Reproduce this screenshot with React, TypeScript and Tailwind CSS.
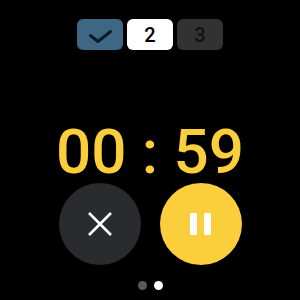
export default function App() {
  return (
    <div
      className="w-[300px] h-[300px] bg-black flex flex-col items-center overflow-hidden"
      style={{ fontFamily: 'Roboto, "Noto Sans", sans-serif' }}
    >
      <div className="mt-[19px] flex gap-1">
        <div className="w-[46px] h-[31px] rounded-[6px] bg-[#3e6783] flex items-center justify-center">
          <svg width="24" height="16" viewBox="0 0 24 16" fill="none">
            <path d="M2.5 8.5 L10 14.5 L22.5 4.5" stroke="#0c1a26" strokeWidth="3" strokeLinecap="round" strokeLinejoin="round" />
          </svg>
        </div>
        <div className="w-[46px] h-[31px] rounded-[6px] bg-white flex items-center justify-center text-[20px] leading-none font-medium text-black">
          2
        </div>
        <div className="w-[46px] h-[31px] rounded-[6px] bg-[#323232] flex items-center justify-center text-[20px] leading-none font-medium text-[#111]">
          3
        </div>
      </div>

      <div className="mt-[71px] text-[62px] leading-none font-medium text-[#fbcf3c] whitespace-pre">
        00 : 59
      </div>

      <div className="flex gap-[19px]">
        <button className="w-[82px] h-[82px] rounded-full bg-[#2a2b2d] flex items-center justify-center">
          <svg width="26" height="26" viewBox="0 0 26 26" fill="none">
            <path d="M2 2 L24 24 M24 2 L2 24" stroke="white" strokeWidth="2.6" />
          </svg>
        </button>
        <button className="w-[82px] h-[82px] rounded-full bg-[#fbcf3c] flex items-center justify-center gap-[7px]">
          <span className="w-[7px] h-[22px] rounded-[1px] bg-white" />
          <span className="w-[7px] h-[22px] rounded-[1px] bg-white" />
        </button>
      </div>

      <div className="mt-4 flex gap-[7px]">
        <span className="w-[9px] h-[9px] rounded-full bg-[#5a5a5a]" />
        <span className="w-[9px] h-[9px] rounded-full bg-white" />
      </div>
    </div>
  )
}
